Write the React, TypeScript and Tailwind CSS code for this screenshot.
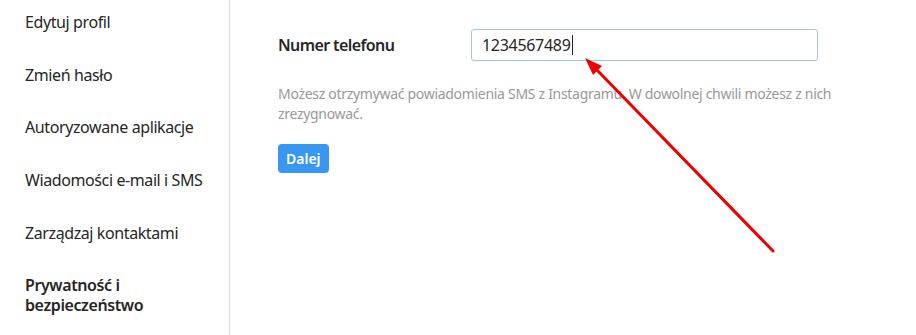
import React from "react";

const items = [
  "Edytuj profil",
  "Zmień hasło",
  "Autoryzowane aplikacje",
  "Wiadomości e-mail i SMS",
  "Zarządzaj kontaktami",
];

export default function App() {
  return (
    <div
      className="relative w-[916px] h-[335px] overflow-hidden bg-white text-[#262626]"
      style={{ fontFamily: '"Noto Sans", "Open Sans", sans-serif' }}
    >
      <div className="flex h-full">
        <aside className="w-[230px] shrink-0 border-r border-[#dbdbdb] h-full">
          <ul className="-mt-[4px]">
            {items.map((t) => (
              <li key={t} className="pl-[25px] pr-4 py-[16.3px] text-[16px] leading-[20px] tracking-[-0.4px]">
                {t}
              </li>
            ))}
            <li className="pl-[25px] pr-4 py-[16.3px] text-[16px] leading-[20px] font-semibold tracking-[-0.4px]">
              Prywatność i
              <br />
              bezpieczeństwo
            </li>
          </ul>
        </aside>
        <main className="pl-[48px] pt-[29px]">
          <div className="flex items-center">
            <label className="w-[193px] shrink-0 text-[16px] font-semibold leading-[20px] tracking-[-0.6px]">
              Numer telefonu
            </label>
            <div className="w-[347px] h-[32px] border border-[#a4c3ea] rounded-[3px] flex items-center pl-[10px] text-[16px] tracking-[-0.3px]">
              <span>1234567489</span>
              <span className="w-px h-[20px] bg-[#262626] ml-px" />
            </div>
          </div>
          <p className="mt-[23px] w-[560px] text-[14px] leading-[20px] text-[#999999] tracking-[-0.3px]">
            Możesz otrzymywać powiadomienia SMS z Instagramu. W dowolnej chwili możesz z nich
            zrezygnować.
          </p>
          <button className="mt-[20px] h-[29px] px-[8px] rounded-[4px] bg-[#3897f0] text-white text-[14px] font-semibold">
            Dalej
          </button>
        </main>
      </div>
      <svg
        className="absolute inset-0 pointer-events-none"
        width="916"
        height="335"
        viewBox="0 0 916 335"
      >
        <line x1="773" y1="251" x2="595" y2="68" stroke="#ee0000" strokeWidth="3" strokeLinecap="round" />
        <polygon points="585,58 602,66 593,75" fill="#ee0000" />
      </svg>
    </div>
  );
}
